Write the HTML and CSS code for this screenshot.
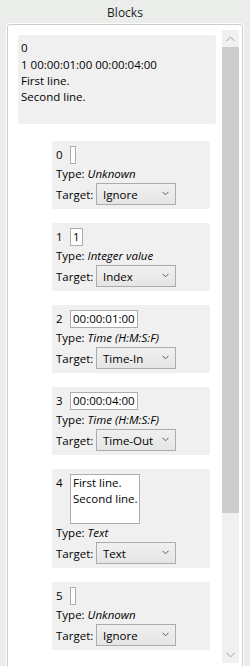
FILE: index.html
```html
<!doctype html>
<html>
    <head>
        <meta charset="utf-8">
        <title>Blocks</title>
        <link rel="stylesheet" href="styles.css">
    </head>
    <body>
        <div id="baslik">Blocks</div>
        <div id="grup">
            <div id="kaydirma">
                <div id="icerik">
                    <div id="onizleme">
                        <div class="ilk-satir">0</div>
                        <div>1 00:00:01:00 00:00:04:00</div>
                        <div>First line.</div>
                        <div>Second line.</div>
                    </div>

                    <div class="blok">
                        <div class="deger-satir"><span class="sira">0</span><span class="kutu"></span></div>
                        <div class="tip-satir">Type: <i>Unknown</i></div>
                        <div class="hedef-satir"><span class="etiket">Target:</span><div class="secim"><span>Ignore</span><svg width="7" height="5" viewBox="0 0 7 5"><polyline points="0.5,0.8 3.5,3.8 6.5,0.8" fill="none" stroke="#5a5a5a" stroke-width="1"/></svg></div></div>
                    </div>

                    <div class="blok">
                        <div class="deger-satir"><span class="sira">1</span><span class="kutu">1</span></div>
                        <div class="tip-satir">Type: <i>Integer value</i></div>
                        <div class="hedef-satir"><span class="etiket">Target:</span><div class="secim"><span>Index</span><svg width="7" height="5" viewBox="0 0 7 5"><polyline points="0.5,0.8 3.5,3.8 6.5,0.8" fill="none" stroke="#5a5a5a" stroke-width="1"/></svg></div></div>
                    </div>

                    <div class="blok">
                        <div class="deger-satir"><span class="sira">2</span><span class="kutu">00:00:01:00</span></div>
                        <div class="tip-satir">Type: <i>Time (H:M:S:F)</i></div>
                        <div class="hedef-satir"><span class="etiket">Target:</span><div class="secim"><span>Time-In</span><svg width="7" height="5" viewBox="0 0 7 5"><polyline points="0.5,0.8 3.5,3.8 6.5,0.8" fill="none" stroke="#5a5a5a" stroke-width="1"/></svg></div></div>
                    </div>

                    <div class="blok">
                        <div class="deger-satir"><span class="sira">3</span><span class="kutu">00:00:04:00</span></div>
                        <div class="tip-satir">Type: <i>Time (H:M:S:F)</i></div>
                        <div class="hedef-satir"><span class="etiket">Target:</span><div class="secim"><span>Time-Out</span><svg width="7" height="5" viewBox="0 0 7 5"><polyline points="0.5,0.8 3.5,3.8 6.5,0.8" fill="none" stroke="#5a5a5a" stroke-width="1"/></svg></div></div>
                    </div>

                    <div class="blok">
                        <div class="deger-satir"><span class="sira">4</span><span class="kutu cok-satir">First line.<br>Second line.</span></div>
                        <div class="tip-satir">Type: <i>Text</i></div>
                        <div class="hedef-satir"><span class="etiket">Target:</span><div class="secim"><span>Text</span><svg width="7" height="5" viewBox="0 0 7 5"><polyline points="0.5,0.8 3.5,3.8 6.5,0.8" fill="none" stroke="#5a5a5a" stroke-width="1"/></svg></div></div>
                    </div>

                    <div class="blok">
                        <div class="deger-satir"><span class="sira">5</span><span class="kutu"></span></div>
                        <div class="tip-satir">Type: <i>Unknown</i></div>
                        <div class="hedef-satir"><span class="etiket">Target:</span><div class="secim"><span>Ignore</span><svg width="7" height="5" viewBox="0 0 7 5"><polyline points="0.5,0.8 3.5,3.8 6.5,0.8" fill="none" stroke="#5a5a5a" stroke-width="1"/></svg></div></div>
                    </div>
                </div>

                <div id="cubuk">
                    <div class="cubuk-bt">
                        <svg width="9" height="6" viewBox="0 0 9 6"><polyline points="0.5,5 4.5,1 8.5,5" fill="none" stroke="#a2a2a2" stroke-width="1"/></svg>
                    </div>
                    <div id="tutamak"></div>
                    <div id="iz"></div>
                    <div class="cubuk-bt">
                        <svg width="9" height="6" viewBox="0 0 9 6"><polyline points="0.5,1 4.5,5 8.5,1" fill="none" stroke="#a2a2a2" stroke-width="1"/></svg>
                    </div>
                </div>
            </div>
        </div>
    </body>
</html>
```

FILE: styles.css
```css
*{
    margin: 0px;
    padding: 0px;
    box-sizing: border-box;
}
body{
    width: 250px;
    height: 666px;
    overflow: hidden;
    background-color: #ebedea;
    font-family: "Open Sans", "Noto Sans", sans-serif;
    font-size: 11.5px;
    color: #000;
}
#baslik{
    height: 24px;
    line-height: 24px;
    text-align: center;
    padding-top: 1px;
    font-size: 12px;
    color: #1e1e1e;
}
#grup{
    margin-left: 7px;
    width: 236px;
    height: 660px;
    background-color: #fff;
    border: 1px solid #c9ced2;
    border-radius: 3px;
    box-shadow: 0 0 0 1px rgba(255,255,255,0.8);
    padding: 5px 3px 0px 10px;
}
#kaydirma{
    height: 633px;
    display: flex;
}
#icerik{
    flex: 1;
    height: 633px;
    overflow: hidden;
    padding-top: 5px;
}
#onizleme{
    width: 198px;
    height: 89px;
    background-color: #f0f0f0;
    border-radius: 2px;
    padding: 4px 3px;
    line-height: 16px;
}
.ilk-satir{
    line-height: 18px;
}
.blok{
    width: 158px;
    margin-left: 34px;
    margin-top: 14px;
    background-color: #f0f0f0;
    border-radius: 2px;
    padding: 4px 3px 4px 3px;
}
#onizleme + .blok{
    margin-top: 17px;
}
.deger-satir{
    display: flex;
    align-items: flex-start;
    line-height: 20px;
}
.sira{
    width: 15px;
    padding-left: 1px;
}
.kutu{
    margin-top: 1px;
    min-width: 6px;
    height: 18px;
    line-height: 16px;
    padding: 0px 2px;
    border: 1px solid #abadb3;
    background-color: #fff;
    white-space: nowrap;
}
.cok-satir{
    width: 70px;
    height: 50px;
    overflow: hidden;
}
.tip-satir{
    height: 18px;
    line-height: 18px;
    padding-left: 1px;
}
.hedef-satir{
    display: flex;
    align-items: center;
    height: 22px;
}
.etiket{
    width: 41px;
    padding-left: 1px;
}
.secim{
    width: 80px;
    height: 22px;
    display: flex;
    align-items: center;
    justify-content: space-between;
    padding: 0px 6px 0px 6px;
    border: 1px solid #acacac;
    background: linear-gradient(#f0f0f0, #e5e5e5);
}
.secim svg{
    margin-top: -2px;
}
#cubuk{
    width: 17px;
    height: 633px;
    margin-left: 5px;
    display: flex;
    flex-direction: column;
    background-color: #f0f0f0;
}
.cubuk-bt{
    height: 17px;
    display: flex;
    justify-content: center;
    align-items: center;
}
#tutamak{
    height: 466px;
    background-color: #cdcdcd;
}
#iz{
    flex: 1;
}
```
